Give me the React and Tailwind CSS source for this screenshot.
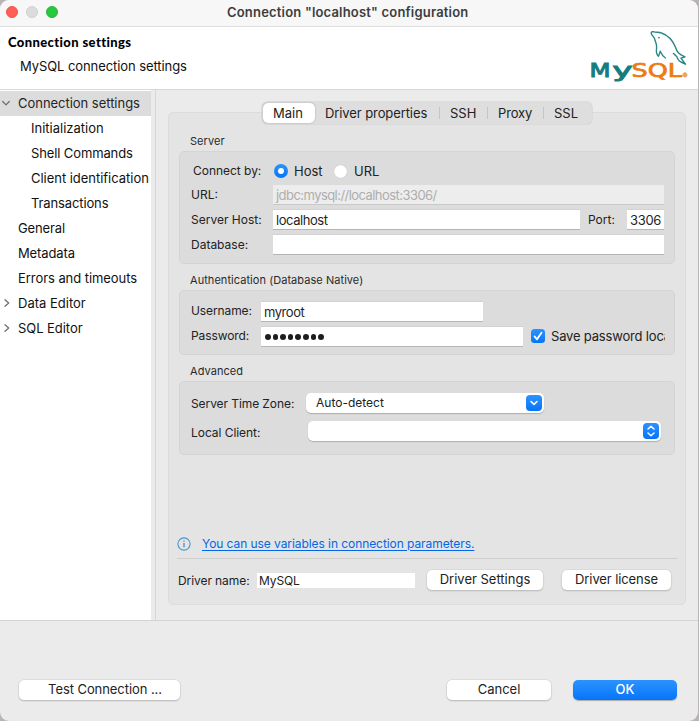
import React from "react";

const tree = [
  { label: "Connection settings", pad: "pl-[18px]", arrow: "down", selected: true, track: "tracking-[-0.03px]" },
  { label: "Initialization", pad: "pl-[31px]", track: "tracking-[0px]" },
  { label: "Shell Commands", pad: "pl-[31px]", track: "tracking-[-0.12px]" },
  { label: "Client identification", pad: "pl-[31px]", track: "tracking-[-0.03px]" },
  { label: "Transactions", pad: "pl-[31px]", track: "tracking-[-0.12px]" },
  { label: "General", pad: "pl-[18px]", track: "tracking-[-0.12px]" },
  { label: "Metadata", pad: "pl-[18px]", track: "tracking-[-0.12px]" },
  { label: "Errors and timeouts", pad: "pl-[18px]", track: "tracking-[-0.06px]" },
  { label: "Data Editor", pad: "pl-[18px]", arrow: "right", track: "tracking-[0px]" },
  { label: "SQL Editor", pad: "pl-[18px]", arrow: "right", track: "tracking-[-0.05px]" },
];

function Arrow({ dir }) {
  return (
    <svg width="10" height="10" viewBox="0 0 10 10" fill="none" stroke="#707070" strokeWidth="1.3" strokeLinecap="round" strokeLinejoin="round" className="absolute left-[1px] top-[7px]">
      <path d={dir === "down" ? "M1.7 3.5 L5 6.9 L8.3 3.5" : "M4 1.7 L7.7 5 L4 8.3"} />
    </svg>
  );
}

function Logo() {
  return (
    <svg width="100" height="56" viewBox="0 0 100 56" className="block">
      <g fill="none" stroke="#2b8785" strokeWidth="1.4" strokeLinejoin="round" strokeLinecap="round">
        <path d="M63.2 3.6 C61 3.4 60.7 5 61.8 6.6 L64.4 10.2 C65.2 14 67.2 16 66.6 20 C66 24 66.4 26.5 68.4 28.2 C69.2 26.8 69.6 25.2 70.2 23.2 C71.5 26 73 28.5 75.4 30" />
        <path d="M63.2 3.6 C66 4.6 68.5 3.9 71.5 5 C79 7.5 83 13 85.6 19.5 C87 24.5 89 26.3 95 28.8 L91 30.2 C92.3 32.4 94 34 95.6 36.2 C92.5 34.4 89.5 34.2 88.3 31.8 C87.2 29 86 27.2 83.4 25.4" />
      </g>
      <circle cx="69" cy="9.6" r="0.9" fill="#2b8785" />
      <text x="-0.5" y="49" textLength="21" lengthAdjust="spacingAndGlyphs" fill="#147d80" stroke="#147d80" strokeWidth="1" className="font-['DejaVu_Sans',sans-serif] text-[19.5px]">M</text>
      <text x="22.5" y="49" textLength="20" lengthAdjust="spacingAndGlyphs" fill="#147d80" stroke="#147d80" strokeWidth="1" className="font-['DejaVu_Sans',sans-serif] text-[19.5px]">y</text>
      <text x="41.5" y="49" textLength="50.5" lengthAdjust="spacingAndGlyphs" fill="#ee7a12" stroke="#ee7a12" strokeWidth="0.7" className="font-['DejaVu_Sans',sans-serif] text-[19.5px]">SQL</text>
      <text x="92" y="49" fill="#ee8a35" stroke="#ee8a35" strokeWidth="0.3" className="font-['DejaVu_Sans',sans-serif] text-[6px]">®</text>
    </svg>
  );
}

function Group({ title, className, children }) {
  return (
    <section>
      <h3 className="flex h-[20px] items-center pl-[21px] text-[11px] tracking-[0.05px] text-[#2a2a2a]">{title}</h3>
      <div className={`ml-[10px] w-[496px] rounded-[5px] border border-[#d4d4d4] bg-[#dcdcdc] ${className}`}>{children}</div>
    </section>
  );
}

function Field({ className = "", children }) {
  return (
    <div className={`flex h-[19px] shrink-0 items-center bg-white pl-[3px] pt-[2px] text-[13px] text-[#1f1f1f] shadow-[0_1px_0_#b5b5b5,0_-1px_0_#d2d2d2] ${className}`}>{children}</div>
  );
}

function Button({ className = "", children }) {
  return (
    <button className={`flex h-[20px] shrink-0 items-center justify-center rounded-[5px] bg-white pb-px text-[13px] text-[#222] shadow-[0_0_0_0.5px_#cfcfcf,0_1px_1.5px_#a8a8a8] ${className}`}>{children}</button>
  );
}

const blue = "bg-linear-to-b from-[#2a93ff] to-[#0474f8]";

export default function App() {
  return (
    <div className="h-[721px] w-[699px] overflow-hidden bg-[#b9b3b5] font-['Inter',sans-serif] leading-none whitespace-nowrap">
      <div className="flex h-[721px] w-[698px] flex-col overflow-hidden rounded-[9px] bg-[#ebebeb]">
        <header className="flex h-[27px] shrink-0 items-center border-b border-[#dedede] bg-[#f7f7f7] pl-[6px]">
          <div className="flex gap-[8px] pb-[2px]">
            <i className="size-[12px] rounded-full border border-[#ee544b] bg-[#ff5f57]" />
            <i className="size-[12px] rounded-full border border-[#cfcfcf] bg-[#dcdcdc]" />
            <i className="size-[12px] rounded-full border border-[#22b638] bg-[#28c840]" />
          </div>
          <h1 className="ml-[169px] pb-[2px] text-[13px] font-semibold tracking-[0.19px] text-[#3d3d3d]">Connection "localhost" configuration</h1>
        </header>

        <div className="flex h-[63px] shrink-0 justify-between border-b border-[#d8d8d8] bg-white">
          <div className="pl-[8px] pt-[8px]">
            <h2 className="font-['Lato',sans-serif] text-[13px] leading-[15px] font-black tracking-[0.39px] text-black">Connection settings</h2>
            <p className="pl-[12px] pt-[9px] text-[13px] leading-[15px] tracking-[-0.08px] text-[#111]">MySQL connection settings</p>
          </div>
          <div className="w-[108px] pt-px"><Logo /></div>
        </div>

        <main className="flex h-[531px] shrink-0 border-b border-[#d3d3d3]">
          <nav className="w-[151px] shrink-0 overflow-hidden bg-white pt-px">
            {tree.map((t) => (
              <div key={t.label} className={`relative flex h-[25px] items-center text-[13px] ${t.pad} ${t.track} ${t.selected ? "bg-[#dcdcdc] text-[#252525]" : "text-[#111]"}`}>
                {t.arrow && <Arrow dir={t.arrow} />}
                {t.label}
              </div>
            ))}
          </nav>
          <div className="w-[5px] shrink-0 border-r border-[#d6d6d6]" />

          <div className="flex-1 pl-[12px] pt-[22px]">
            <div className="h-[493px] w-[518px] rounded-[5px] border border-[#dcdcdc] bg-[#e4e4e4]">
              <div className="relative -mt-[11px] ml-[93px] flex h-[22px] w-[330px] items-center rounded-[5px] bg-[#dedede] pl-px text-[13px] text-[#222] shadow-[0_0_0_0.5px_#cfcfcf]">
                <span className="flex h-[20px] w-[52px] items-center justify-center rounded-[5px] bg-white pr-[2px] shadow-[0_0_1.5px_#8f8f8f]">Main</span>
                <span className="w-[124px] pl-[10px] tracking-[-0.09px]">Driver properties</span>
                <span className="flex h-[12px] w-[48px] items-center border-l border-[#c4c4c4] pl-[10px]">SSH</span>
                <span className="flex h-[12px] w-[56px] items-center border-l border-[#c4c4c4] pl-[10px] tracking-[-0.15px]">Proxy</span>
                <span className="flex h-[12px] items-center border-l border-[#c4c4c4] pl-[10px]">SSL</span>
              </div>

              <div className="pt-[7px]">
                <Group title="Server" className="h-[113px] pl-[11px] pt-[10px]">
                  <div className="flex h-[18px] items-center text-[13px] text-[#222]">
                    <span className="w-[83px] pl-[2px] text-[12px] tracking-[-0.03px]">Connect by:</span>
                    <i className={`flex size-[14px] items-center justify-center rounded-full ${blue}`}><b className="size-[6px] rounded-full bg-white" /></i>
                    <span className="w-[46px] pl-[6px] pt-px">Host</span>
                    <i className="size-[13px] rounded-full bg-white shadow-[0_0_1px_#aaa]" />
                    <span className="pl-[7px] pt-px">URL</span>
                  </div>
                  <div className="mt-[5px] flex items-center text-[12px] text-[#222]">
                    <span className="w-[82px]">URL:</span>
                    <div className="flex h-[19px] w-[391px] items-center bg-[#ededed] pl-[3px] pt-[2px] text-[13px] tracking-[-0.55px] text-[#adadad] shadow-[0_1px_0_#c8c8c8]">jdbc:mysql://localhost:3306/</div>
                  </div>
                  <div className="mt-[6px] flex items-center text-[12px] text-[#222]">
                    <span className="w-[82px]">Server Host:</span>
                    <Field className="w-[307px] tracking-[-0.45px]">localhost</Field>
                    <span className="w-[47px] pl-[8px]">Port:</span>
                    <Field className="w-[37px] tracking-[-0.3px]">3306</Field>
                  </div>
                  <div className="mt-[6px] flex items-center text-[12px] text-[#222]">
                    <span className="w-[82px]">Database:</span>
                    <Field className="w-[391px]" />
                  </div>
                </Group>
              </div>

              <div className="pt-[6px]">
                <Group title="Authentication (Database Native)" className="h-[65px] pl-[11px] pt-[10.5px]">
                  <div className="flex items-center text-[12px] text-[#222]">
                    <span className="w-[70px] tracking-[-0.1px]">Username:</span>
                    <Field className="w-[222px] tracking-[-0.45px]">myroot</Field>
                  </div>
                  <div className="mt-[6px] flex items-center text-[12px] text-[#222]">
                    <span className="w-[70px] tracking-[-0.1px]">Password:</span>
                    <Field className="w-[262px]">
                      <span className="flex gap-[2px] pl-px">
                        {Array.from({ length: 8 }, (_, i) => <i key={i} className="size-[5.6px] rounded-full bg-[#1d1d1d]" />)}
                      </span>
                    </Field>
                    <i className={`mb-px ml-[8px] flex size-[14px] shrink-0 items-center justify-center rounded-[3.5px] ${blue}`}>
                      <svg width="10" height="10" viewBox="0 0 10 10" fill="none" stroke="#fff" strokeWidth="1.8" strokeLinecap="round" strokeLinejoin="round"><path d="M1.5 5.4 L4 8.3 L8.5 1.7" /></svg>
                    </i>
                    <span className="ml-[6px] w-[114px] overflow-hidden text-[13px] leading-[16px] tracking-[-0.18px]">Save password locally</span>
                  </div>
                </Group>
              </div>

              <div className="pt-[6px]">
                <Group title="Advanced" className="h-[74px] pl-[11px] pt-[11px]">
                  <div className="flex items-center text-[12px] text-[#222]">
                    <span className="w-[115px] pt-[2px] tracking-[-0.08px]">Server Time Zone:</span>
                    <div className="flex h-[20px] w-[238px] items-center justify-between rounded-[5px] bg-white pl-[10px] pr-[2px] shadow-[0_1px_1px_#adadad]">
                      Auto-detect
                      <i className={`flex size-[16px] items-center justify-center rounded-[4px] ${blue}`}>
                        <svg width="8" height="6" viewBox="0 0 8 6" fill="none" stroke="#fff" strokeWidth="1.6" strokeLinecap="round" strokeLinejoin="round"><path d="M1 1.5 L4 4.4 L7 1.5" /></svg>
                      </i>
                    </div>
                  </div>
                  <div className="mt-[8px] flex items-center text-[12px] text-[#222]">
                    <span className="w-[117px] pt-[3px] tracking-[-0.05px]">Local Client:</span>
                    <div className="flex h-[20px] w-[353px] items-center justify-end rounded-[5px] bg-white pr-[2px] shadow-[0_1px_1px_#adadad]">
                      <i className={`flex size-[16px] items-center justify-center rounded-[4px] ${blue}`}>
                        <svg width="8" height="12" viewBox="0 0 8 12" fill="none" stroke="#fff" strokeWidth="1.5" strokeLinecap="round" strokeLinejoin="round"><path d="M1 4 L4 1.2 L7 4 M1 8 L4 10.8 L7 8" /></svg>
                      </i>
                    </div>
                  </div>
                </Group>
              </div>

              <div className="ml-[8px] mt-[80px] flex h-[24px] w-[501px] items-center border-b border-[#cfcfcf] pb-[6px]">
                <svg width="14" height="14" viewBox="0 0 14 14" fill="none" stroke="#4a97cf" className="block"><circle cx="7" cy="7" r="6.1" strokeWidth="1.1" /><path d="M7 6 V10.3 M7 3.5 V4.8" strokeWidth="1.4" /></svg>
                <a className="ml-[11px] text-[12px] tracking-[-0.07px] text-[#0068e8] underline underline-offset-2">You can use variables in connection parameters.</a>
              </div>
              <div className="ml-[9px] mt-[11px] flex h-[20px] items-center text-[#222]">
                <span className="w-[79px] pt-px text-[12px] tracking-[-0.08px]">Driver name:</span>
                <div className="flex h-[15px] w-[158px] items-center bg-white pl-[2px] pt-px text-[12px] tracking-[-0.1px]">MySQL</div>
                <Button className="ml-[12px] w-[116px]">Driver Settings</Button>
                <Button className="ml-[19px] w-[109px] tracking-[-0.1px]">Driver license</Button>
              </div>
            </div>
          </div>
        </main>

        <footer className="flex pl-[19px] pt-[59px]">
          <Button className="w-[161px] pl-[11px] tracking-[-0.07px]">Test Connection ...</Button>
          <Button className="ml-[267px] w-[104px]">Cancel</Button>
          <button className={`ml-[22px] flex h-[20px] w-[104px] items-center justify-center rounded-[5px] pb-px text-[13px] font-medium text-white shadow-[0_1px_1px_#aaa] ${blue}`}>OK</button>
        </footer>
      </div>
    </div>
  );
}
